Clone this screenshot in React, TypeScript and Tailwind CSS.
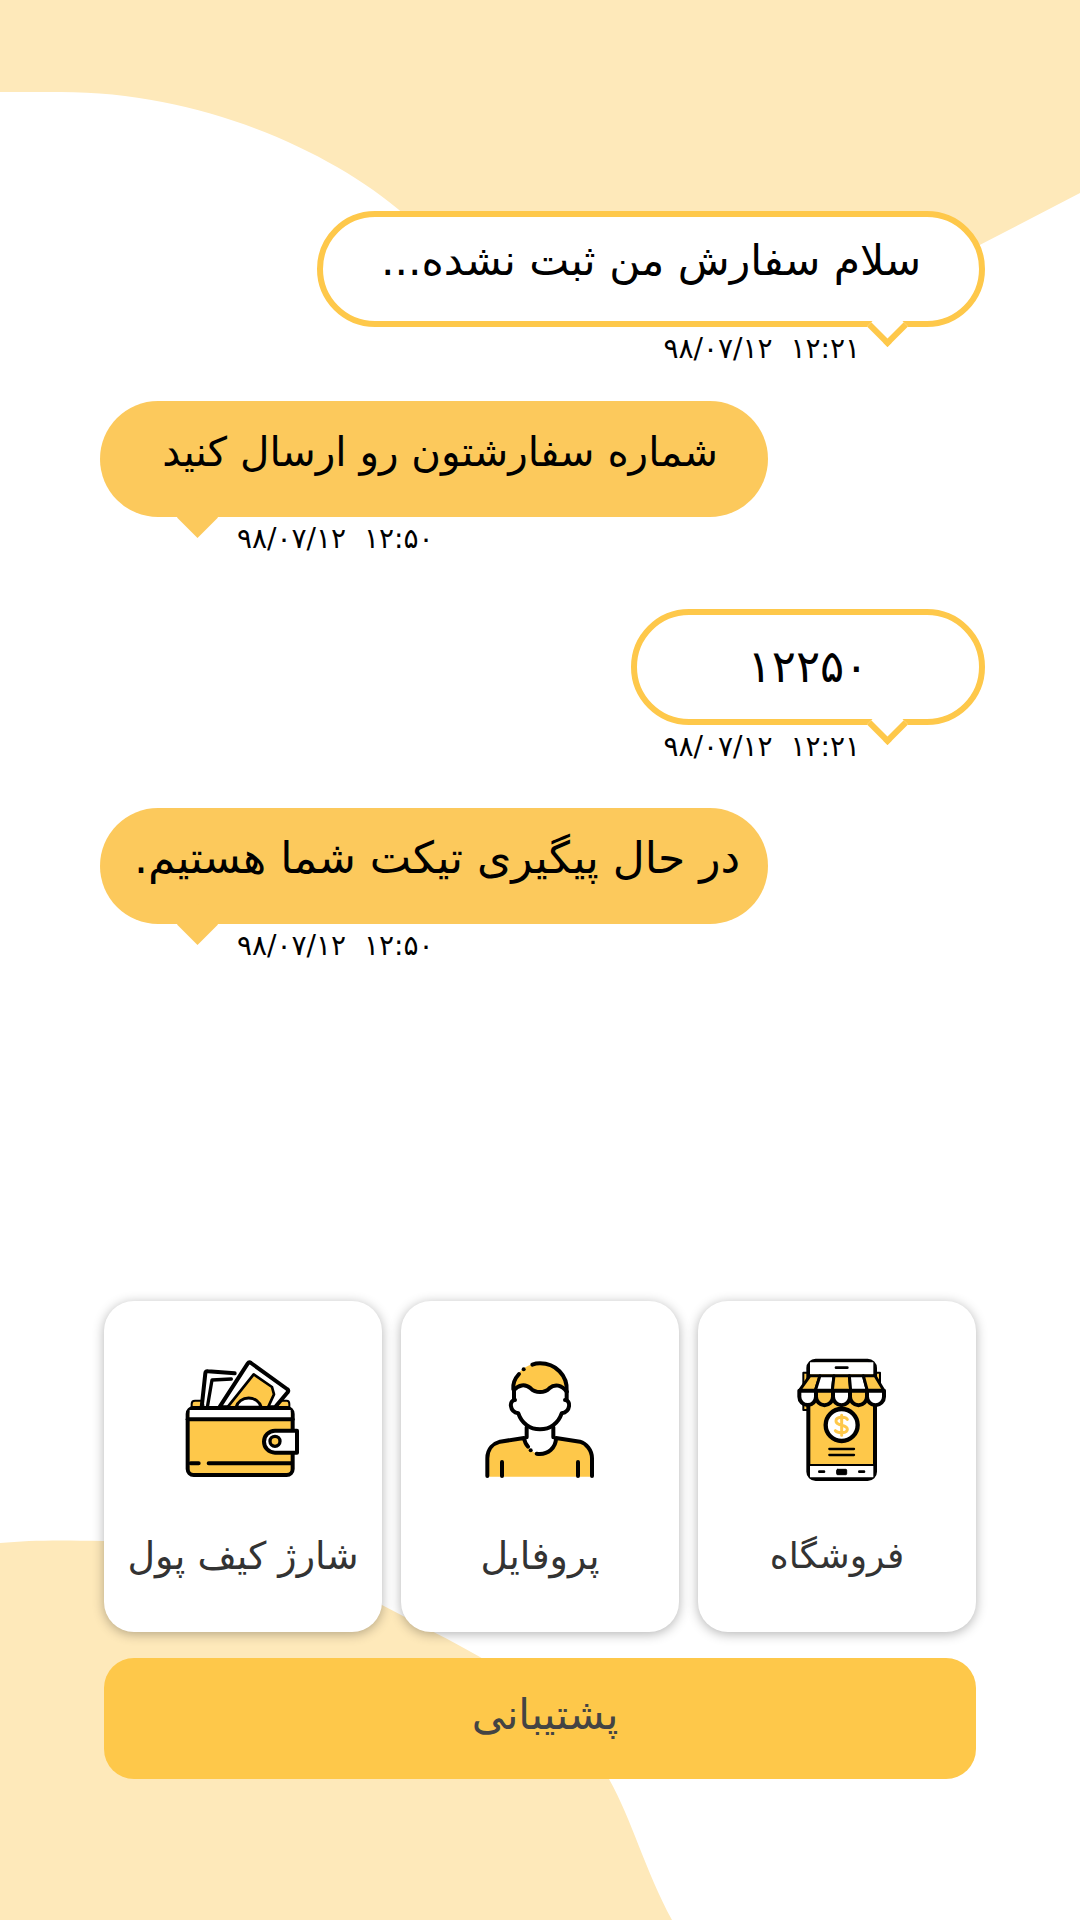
const K = "#000";
const Y = "#fec84a";

function WalletIcon() {
  return (
    <svg viewBox="0 30 600 510" className="w-[200px] h-[170px] ml-[14px] shrink-0" fill="none" stroke={K} strokeWidth="12" strokeLinecap="round" strokeLinejoin="round">
      <path d="M125 262v-10q0-10 10-10h25v20zM380 262l10-20h20q8 0 8 10v10z" fill={Y} strokeWidth="6" />
      <path d="M155 262L166 160q1-7 8-6l80 6" fill="#fff" />
      <path d="M172 262L186 180l58-3" strokeWidth="10" />
      <path d="M208 262L293 131q4-6 10-2l108 78q6 4 2 10l-38 45z" fill="#fff" />
      <path d="M232 262L311 163l55 38 6 22-18 39z" fill={Y} stroke={Y} strokeWidth="4" />
      <path d="M232 262L311 163l55 38 6 22-18 39" strokeWidth="8" />
      <path d="M258 262a39 36 0 0 1 76 0z" fill="#fff" strokeWidth="9" />
      <rect x="113" y="264" width="315" height="201" rx="18" fill={Y} />
      <path d="M119 270H422V298H119z" fill="#fff" stroke="none" />
      <path d="M113 298H428" />
      <path d="M122 430H146M176 430H424" />
      <path d="M441 332H375a33 33 0 0 0 0 66H441z" fill="#fff" />
      <circle cx="375" cy="364" r="15" fill={Y} strokeWidth="10" />
    </svg>
  );
}

function ProfileIcon() {
  return (
    <svg viewBox="0 0 540 510" className="w-[180px] h-[170px] shrink-0" fill="none" stroke={K} strokeWidth="12" strokeLinecap="round" strokeLinejoin="round">
      <path d="M190 178C186 135 225 100 270 100C315 100 354 135 350 185C335 165 315 160 298 175C283 190 257 190 242 175C225 160 205 165 190 178Z" fill={Y} stroke="none" />
      <path d="M190 178C188 160 195 145 207 132M247 104C255 101 262 100 270 100C315 100 354 135 350 185" />
      <path d="M221 118h.01" strokeWidth="12" />
      <path d="M192 180C205 165 225 160 242 175C257 190 283 190 298 175C315 160 335 165 350 185" />
      <path d="M195 210C175 210 175 245 205 250C215 280 240 298 270 298C300 298 325 280 335 250C365 245 365 210 345 210" fill="#fff" stroke="none" />
      <path d="M195 210C177 210 177 245 205 250C215 280 240 298 270 298C300 298 325 280 335 250C363 245 363 210 345 210" />
      <path d="M192 180V210M350 185V210" />
      <path d="M112 440V385C112 355 132 340 150 335L222 324C226 350 250 372 270 372C295 372 318 352 318 324L390 335C408 340 426 360 426 385V440Z" fill={Y} stroke="none" />
      <path d="M112 438V385C112 355 132 340 150 335L222 324C224 335 228 344 234 350M260 371C295 376 318 352 318 324L390 335C408 340 426 360 426 385V438" />
      <path d="M242 361h.01" strokeWidth="12" />
      <path d="M230 292V322M310 292V322M156 396V438M384 396V438" />
    </svg>
  );
}

function ShopIcon() {
  const stripes = [
    ["M150 137H180L166 182H118Z", Y],
    ["M180 137H222L217 182H166Z", "#fff"],
    ["M222 137H268L272 182H217Z", Y],
    ["M268 137H310L322 182H272Z", "#fff"],
    ["M310 137H345L372 182H322Z", Y],
  ];
  const scallops = [
    ["M118 182H168V200A25 25 0 0 1 118 200Z", "#fff"],
    ["M168 182H219V200A25.5 25.5 0 0 1 168 200Z", Y],
    ["M219 182H270V200A25.5 25.5 0 0 1 219 200Z", "#fff"],
    ["M270 182H321V200A25.5 25.5 0 0 1 270 200Z", Y],
    ["M321 182H372V200A25.5 25.5 0 0 1 321 200Z", "#fff"],
  ];
  return (
    <svg viewBox="0 0 450 510" className="w-[150px] h-[170px] mr-[4px] shrink-0" fill="none" stroke={K} strokeWidth="12" strokeLinecap="round" strokeLinejoin="round">
      <path d="M145 128H130V240H145zM345 128H360V185H345z" fill={Y} strokeWidth="6" />
      <rect x="145" y="92" width="200" height="355" rx="22" fill={Y} />
      <path d="M150 97H340V133H150zM150 405H340V442H150z" fill="#fff" stroke="none" />
      <path d="M145 405H345" strokeWidth="6" />
      <path d="M228 113H262" strokeWidth="8" />
      {stripes.map(([d, c]) => <path key={d} d={d} fill={c} strokeWidth="9" />)}
      {scallops.map(([d, c]) => <path key={d} d={d} fill={c} strokeWidth="12" />)}
      <circle cx="245" cy="285" r="48" fill="#fff" strokeWidth="13" />
      <path d="M262 268C258 260 228 258 228 273C228 290 262 282 262 298C262 312 232 310 226 302M245 256V316" stroke={Y} strokeWidth="9" />
      <path d="M208 357H282M208 375H282" strokeWidth="7" />
      <rect x="230" y="418" width="30" height="16" rx="3" fill={K} strokeWidth="3" />
      <path d="M178 425H192M298 425H312" strokeWidth="8" />
    </svg>
  );
}

function Msg({ text, time, mine, w, cls, tcls }: { text: string; time: string; mine?: boolean; w: string; cls: string; tcls: string }) {
  return (
    <div className={`flex flex-col ${mine ? "self-end items-end" : "self-start items-start"} ${cls}`}>
      <div className={`relative h-[116px] ${w} rounded-[58px] flex items-center justify-center ${mine ? "bg-white border-[6px] border-[#fec84a]" : "bg-[#fcc95c]"}`}>
        {mine ? (
          <div className="absolute right-[77px] bottom-[-20px] w-[29px] h-[29px] rotate-45 bg-white border-r-[6px] border-b-[6px] border-[#fec84a]" />
        ) : (
          <div className="absolute left-[83px] bottom-[-15px] w-[29px] h-[29px] rotate-45 bg-[#fcc95c]" />
        )}
        <span dir="rtl" className={`relative leading-none text-black whitespace-nowrap ${tcls}`}>{text}</span>
      </div>
      <div dir="rtl" className={`whitespace-pre text-[28px] leading-[40px] text-black mt-[2px] ${mine ? "mr-[125px]" : "ml-[137px]"}`}>{time}</div>
    </div>
  );
}

function Card({ label, children, tcls }: { label: string; children: React.ReactNode; tcls: string }) {
  return (
    <div className="w-[278px] h-[331px] bg-white rounded-[30px] shadow-[0_2px_12px_rgba(0,0,0,0.3)] flex flex-col items-center pt-[29px]">
      {children}
      <div dir="rtl" className={`leading-[50px] text-[#333] whitespace-nowrap mt-[31px] ${tcls}`}>{label}</div>
    </div>
  );
}

export default function App() {
  return (
    <div className="relative w-[1080px] h-[1920px] overflow-hidden bg-white font-['DejaVu_Sans',sans-serif]">
      <svg className="absolute inset-0 w-[1080px] h-[1920px]" viewBox="0 0 1080 1920">
        <path d="M0 0H1080V193L970 250L500 300L404 214C330 150 200 92 61 92C40 92 20 92 0 92Z" fill="#fee9ba" />
        <path d="M0 1543C30 1540 60 1540 103 1541C200 1545 300 1560 382 1605C420 1625 450 1640 480 1657C540 1695 590 1745 609 1779C632 1820 645 1870 672 1920H0Z" fill="#fee9ba" />
      </svg>
      <div className="relative flex flex-col h-full pt-[211px] pl-[100px] pr-[95px]">
        <Msg mine w="w-[668px]" cls="h-[190px]" tcls="text-[42.5px] pb-[16px]" text="سلام سفارش من ثبت نشده..." time="۱۲:۲۱  ۹۸/۰۷/۱۲" />
        <Msg w="w-[668px]" cls="h-[208px]" tcls="text-[40.5px] pb-[14px] ml-[12px]" text="شماره سفارشتون رو ارسال کنید" time="۱۲:۵۰  ۹۸/۰۷/۱۲" />
        <Msg mine w="w-[354px]" cls="h-[199px]" tcls="text-[45px] pb-[2px]" text="۱۲۲۵۰" time="۱۲:۲۱  ۹۸/۰۷/۱۲" />
        <Msg w="w-[668px]" cls="h-[200px]" tcls="text-[44px] pb-[16px] ml-[6px]" text="در حال پیگیری تیکت شما هستیم." time="۱۲:۵۰  ۹۸/۰۷/۱۲" />
        <div className="flex flex-row-reverse gap-[19px] w-[872px] ml-[4px] mt-[293px]">
          <Card tcls="text-[36px]" label="فروشگاه"><ShopIcon /></Card>
          <Card tcls="text-[38px]" label="پروفایل"><ProfileIcon /></Card>
          <Card tcls="text-[38px]" label="شارژ کیف پول"><WalletIcon /></Card>
        </div>
        <div className="w-[872px] ml-[4px] mt-[26px] h-[121px] rounded-[30px] bg-[#fec84a] flex items-center justify-center">
          <span dir="rtl" className="text-[42px] leading-none text-[#444] pb-[8px] ml-[10px]">پشتیبانی</span>
        </div>
      </div>
    </div>
  );
}
